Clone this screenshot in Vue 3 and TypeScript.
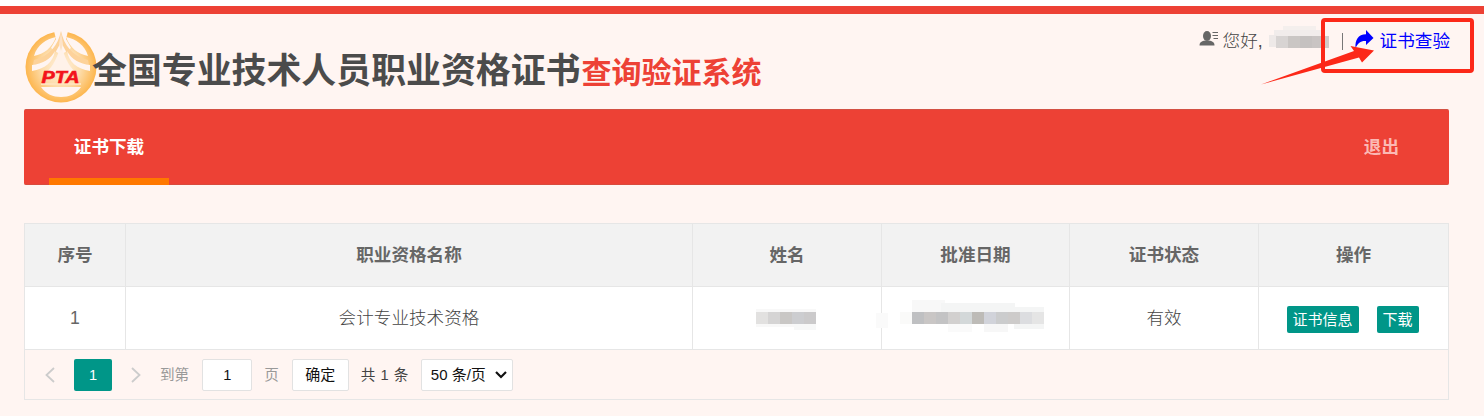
<script setup lang="ts">
interface Certificate {
  id: number
  title: string
  status: string
}

interface Block {
  x: number
  y: number
  w: number
  h: number
  fill: string
}

const columns: string[] = ['序号', '职业资格名称', '姓名', '批准日期', '证书状态', '操作']
const certificates: Certificate[] = [{ id: 1, title: '会计专业技术资格', status: '有效' }]

const strip = (x: number, y: number, w: number, h: number, fills: string[]): Block[] =>
  fills.map((fill, i) => ({ x: x + i * w, y, w, h, fill }))

const userMask: Block[] = [
  { x: 14, y: 0, w: 33, h: 10, fill: '#f4efed' },
  { x: 5, y: 4, w: 50, h: 8, fill: '#f1eceb' },
  { x: 0, y: 9, w: 8, h: 12, fill: '#eee9e8' },
  ...strip(7, 10, 12, 12, ['#d8d4d3', '#cac6c4', '#c5c1c0', '#c9c4c3', '#d2cbc8']).map((b) => ({ ...b, w: b.x === 55 ? 5 : 12 })),
]
const nameMask: Block[] = [
  { x: 0, y: 3, w: 60, h: 18, fill: '#f8f8f8' },
  { x: 38, y: 18, w: 22, h: 6, fill: '#f7f8f8' },
  ...strip(0, 6, 12, 12, ['#e2e1e0', '#d5d4d4', '#c9c7c5', '#cccdd0', '#cbcacb']),
]
const dateMask: Block[] = [
  { x: 0, y: 13, w: 12, h: 15, fill: '#fafafa' },
  { x: 24, y: 12, w: 12, h: 12, fill: '#fafaf9' },
  { x: 36, y: 0, w: 33, h: 13, fill: '#f8f8f8' },
  { x: 65, y: 3, w: 74, h: 11, fill: '#f4f5f5' },
  { x: 138, y: 7, w: 30, h: 22, fill: '#f4f5f5' },
  { x: 72, y: 22, w: 24, h: 10, fill: '#fafafa' },
  { x: 108, y: 22, w: 24, h: 10, fill: '#f7f7f7' },
  ...strip(36, 12, 12, 12, ['#bfc0c2', '#c9c6c5', '#c3c3c4', '#d2d0cf', '#d3d8d9', '#bdbbb7', '#d1d3da', '#cbcccd', '#cdcbca', '#dcdde0', '#e5e5e5']),
]
</script>

<template>
  <div class="page">
    <div class="topline"></div>
    <header class="header">
      <div class="brand">
        <svg class="emblem" width="72" height="72" viewBox="0 0 72 72">
          <defs>
            <radialGradient id="gold" cx="50%" cy="50%" r="50%">
              <stop offset="0" stop-color="#fff1df" />
              <stop offset="0.55" stop-color="#fddcaa" />
              <stop offset="1" stop-color="#fdb64e" />
            </radialGradient>
          </defs>
          <circle cx="36" cy="36" r="35.5" fill="url(#gold)" />
          <path d="M29 0H43L41 8L46 17L36 24L26 17L31 8Z" fill="#fff5f2" />
          <path d="M31 6C21 8 12 14 9 25C19 23 27 17 31 6ZM41 6C51 8 60 14 63 25C53 23 45 17 41 6Z" fill="#fff5f2" />
          <path d="M36 0C33 14 25 25 9 29L8 34C22 33 31 24 36 10C41 24 50 33 64 34L63 29C47 25 39 14 36 0Z" fill="#fdd29a" />
          <path d="M7 34C17 33 26 28 30 20C28 31 20 38 7 40ZM65 34C55 33 46 28 42 20C44 31 52 38 65 40Z" fill="#fff5f2" />
          <path d="M36 7C35 23 29 34 21 42H51C43 34 37 23 36 7Z" fill="#fff2e9" />
          <path d="M36 1L34 13L36 20L38 13Z" fill="#fde3c8" />
          <path d="M16 56H56C51 63 44 66 36 66S21 63 16 56Z" fill="#fff5f2" />
          <rect x="16" y="52" width="40" height="2" fill="#ffe3bb" />
          <text x="35.5" y="52" class="emblem-text" text-anchor="middle" textLength="38" lengthAdjust="spacingAndGlyphs">PTA</text>
        </svg>
        <h1 class="title">全国专业技术人员职业资格证书<span class="subtitle">查询验证系统</span></h1>
      </div>
      <div class="account">
        <svg class="user-icon" width="20" height="16" viewBox="0 0 20 16">
          <ellipse cx="8" cy="5" rx="4" ry="5" fill="#666" />
          <path d="M0.5 14.5C0.5 11 3 10 6 9.5H10C13 10 15.5 11 15.5 14.5Z" fill="#666" />
          <path d="M13.5 1.5H19M13.5 4.5H19M14.5 7.5H19" stroke="#666" stroke-width="1" />
        </svg>
        <span class="hello">您好,</span>
        <svg class="user-mask" width="61" height="25"><rect v-for="(b, i) in userMask" :key="i" :x="b.x" :y="b.y" :width="b.w" :height="b.h" :fill="b.fill" /></svg>
        <span class="divider"></span>
        <svg class="share-icon" width="19" height="19" viewBox="0 0 19 19">
          <path d="M11 0L18.5 8L11 15V11C6 10.5 3 13 0.5 18C0 10 3 4.5 11 4.3Z" fill="#00f" />
        </svg>
        <a class="verify">证书查验</a>
      </div>
      <svg class="callout" width="216" height="76" viewBox="0 0 216 76">
        <rect x="63" y="3" width="149" height="51" rx="2" fill="none" stroke="#fc2818" stroke-width="4" />
        <path d="M1 67.5L94 34L90.500 29L114 33.500L102 45.500L99 40.500Z" fill="#fc2818" />
      </svg>
    </header>

    <nav class="nav">
      <a class="tab">证书下载</a>
      <a class="logout">退出</a>
    </nav>

    <section class="table">
      <div class="row head">
        <div v-for="c in columns" :key="c" class="cell">{{ c }}</div>
      </div>
      <div v-for="cert in certificates" :key="cert.id" class="row">
        <div class="cell number">{{ cert.id }}</div>
        <div class="cell">{{ cert.title }}</div>
        <div class="cell"><svg class="name-mask" width="60" height="24"><rect v-for="(b, i) in nameMask" :key="i" :x="b.x" :y="b.y" :width="b.w" :height="b.h" :fill="b.fill" /></svg></div>
        <div class="cell"><svg class="date-mask" width="168" height="33"><rect v-for="(b, i) in dateMask" :key="i" :x="b.x" :y="b.y" :width="b.w" :height="b.h" :fill="b.fill" /></svg></div>
        <div class="cell">{{ cert.status }}</div>
        <div class="cell actions">
          <button class="action wide">证书信息</button>
          <button class="action">下载</button>
        </div>
      </div>
      <footer class="pager">
        <svg class="arrow" width="10" height="16" viewBox="0 0 10 16"><path d="M9 1L1.5 8L9 15" /></svg>
        <span class="current">1</span>
        <svg class="arrow next" width="10" height="16" viewBox="0 0 10 16"><path d="M1 1L8.5 8L1 15" /></svg>
        <span class="muted goto">到第</span>
        <span class="box page-input">1</span>
        <span class="muted unit">页</span>
        <button class="box confirm">确定</button>
        <span class="total">共 1 条</span>
        <div class="box limit">
          <span>50 条/页</span>
          <svg width="12" height="8" viewBox="0 0 12 8"><path d="M1 1L6 6L11 1" fill="none" stroke="#111" stroke-width="2.2" /></svg>
        </div>
      </footer>
    </section>
  </div>
</template>

<style>
body {
  margin: 0;
  background: #fff5f2;
}
</style>

<style scoped>
.page {
  box-sizing: border-box;
  height: 416px;
  overflow: hidden;
  padding-top: 6px;
  background: linear-gradient(#fff 6px, #fff5f2 6px);
  color: #666;
  font-family: "Liberation Sans", "Noto Sans CJK SC", sans-serif;
  font-size: 17.6px;
}
.topline {
  height: 8px;
  background: #ed4135;
}
.header {
  position: relative;
  display: flex;
  justify-content: space-between;
  height: 95px;
  padding: 0 34px 0 24px;
}
.brand {
  display: flex;
  align-items: flex-start;
}
.emblem {
  margin: 17px 0 0 1px;
}
.emblem-text {
  fill: #f3131b;
  font: italic bold 16px "Liberation Sans", sans-serif;
  stroke: #f3131b;
  stroke-width: 0.6px;
}
.title {
  display: flex;
  align-items: baseline;
  margin: 32px 0 0 -5px;
  color: #4b4b4b;
  font-size: 34.9px;
  line-height: 50px;
  font-weight: 700;
  white-space: nowrap;
}
.subtitle {
  margin-left: 1px;
  color: #ed4135;
  font-size: 30px;
}
.account {
  display: flex;
  align-items: center;
  height: 50px;
}
.user-icon {
  margin-right: 4px;
}
.hello {
  width: 46px;
  color: #444;
  white-space: nowrap;
  font-weight: 300;
}
.user-mask {
  margin: 0 12px 2px 0;
}
.divider {
  width: 1px;
  height: 17px;
  margin: 4px 12px 0 0;
  background: #777;
}
.share-icon {
  margin-right: 6px;
}
.verify {
  color: #00f;
  font-weight: 400;
}
.callout {
  position: absolute;
  left: 1260px;
  top: 3px;
}
.nav {
  display: flex;
  justify-content: space-between;
  box-sizing: border-box;
  height: 76px;
  margin: 0 35px 38px 24px;
  padding: 0 50px 0 25px;
  border-top: 1px solid #d35043;
  border-bottom: 1px solid #d94b3d;
  border-radius: 2px;
  background: #ed4135;
  font-weight: 700;
  line-height: 74px;
}
.tab {
  box-sizing: border-box;
  height: 75px;
  width: 120px;
  border-bottom: 7px solid #ff7800;
  color: #fff;
  text-align: center;
}
.logout {
  color: #fbb9b4;
}
.table {
  box-sizing: border-box;
  width: 1425px;
  margin-left: 24px;
  border: 1px solid #e6e6e6;
}
.row {
  display: grid;
  grid-template-columns: 101px 567px 189px 188px 189px 189px;
  height: 63px;
  box-sizing: border-box;
  border-bottom: 1px solid #e6e6e6;
  background: #fff;
}
.head {
  background: #f2f2f2;
  font-weight: 700;
}
.cell {
  display: flex;
  align-items: center;
  justify-content: center;
  box-sizing: border-box;
  padding-bottom: 3px;
  border-right: 1px solid #e6e6e6;
}
.row:not(.head) .cell {
  color: #444;
  font-weight: 300;
}
.row .cell.number {
  padding-bottom: 0;
  color: #666;
}
.cell:last-child {
  border-right: 0;
}
.name-mask {
  margin: 2px 2px 0 0;
}
.date-mask {
  flex-shrink: 0;
  margin: 0 31px 1px 0;
}
.cell.actions {
  gap: 18px;
  padding: 3px 2px 0 0;
}
.action {
  width: 42px;
  height: 27px;
  padding: 0;
  border: 0;
  border-radius: 2px;
  background: #009688;
  color: #fff;
  font: 15px/27px "Liberation Sans", "Noto Sans CJK SC", sans-serif;
}
.action.wide {
  width: 72px;
}
.pager {
  display: flex;
  align-items: center;
  height: 49px;
  padding-left: 20px;
  font-size: 14.6px;
  color: #444;
}
.arrow path {
  fill: none;
  stroke: #ccc;
  stroke-width: 1.8;
}
.current {
  width: 38px;
  height: 32px;
  margin: 0 19px;
  border-radius: 2px;
  background: #009688;
  color: #fff;
  line-height: 32px;
  text-align: center;
}
.muted {
  padding-bottom: 2px;
  color: #999;
}
.goto {
  margin: 0 13px 0 19px;
}
.box {
  box-sizing: border-box;
  height: 32px;
  border: 1px solid #e2e2e2;
  border-radius: 2px;
  background: #fff;
  color: #111;
  text-align: center;
}
.page-input {
  width: 50px;
  line-height: 31px;
}
.unit {
  margin: 0 13px 0 12px;
}
.confirm {
  width: 57px;
  padding: 0;
  font: 15px/30px "Liberation Sans", "Noto Sans CJK SC", sans-serif;
}
.total {
  width: 48px;
  margin: 0 12px;
  padding-bottom: 2px;
  word-spacing: 1px;
  white-space: nowrap;
}
.limit {
  display: flex;
  align-items: center;
  justify-content: space-between;
  width: 92px;
  padding: 0 5px 2px 9px;
  font-size: 15px;
  white-space: nowrap;
}
.limit svg {
  margin-top: 2px;
}
</style>
